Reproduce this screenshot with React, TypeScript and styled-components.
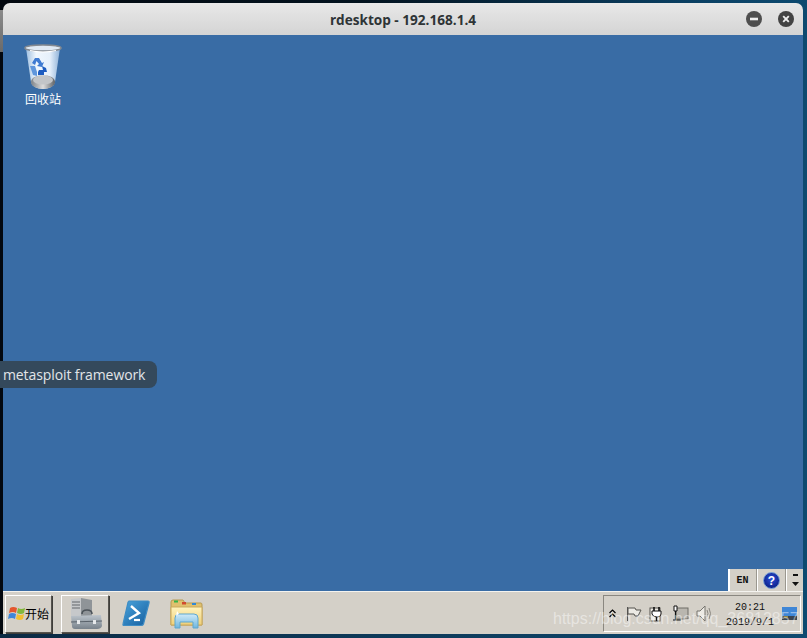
import React from 'react';
import styled, { createGlobalStyle } from 'styled-components';

const GlobalStyle = createGlobalStyle`
  html, body {
    margin: 0;
    padding: 0;
    height: 100%;
    overflow: hidden;
    background: #000;
  }
`;

const Screen = styled.div`
  position: relative;
  box-sizing: border-box;
  width: 807px;
  height: 638px;
  padding: 3px 4px 4px 3px;
  overflow: hidden;
  display: flex;
  background:
    linear-gradient(#8b8b8b, #6a6a6a) 0 10px / 3px 42px no-repeat,
    linear-gradient(90deg, #0b2a44, #0f4a70) 0 100% / 100% 4px no-repeat,
    linear-gradient(90deg, #03080f 0%, #03131f 45%, #0a3f62 85%, #0d4a70 100%);
`;

const Window = styled.div`
  flex: 1;
  display: flex;
  flex-direction: column;
  border-radius: 7px 7px 0 0;
  overflow: hidden;
`;

const TitleBar = styled.header`
  position: relative;
  flex: 0 0 32px;
  display: flex;
  align-items: center;
  justify-content: center;
  background: linear-gradient(180deg, #e8e8e8 0%, #d4d4d4 100%);
`;

const Title = styled.h1`
  margin: 0;
  font: 700 13.6px "Open Sans", sans-serif;
  color: #2e3436;
`;

const WindowButtons = styled.div`
  position: absolute;
  right: 9px;
  top: 8px;
  display: flex;
  gap: 16px;
`;

const RoundButton = styled.svg`
  display: block;
  width: 16px;
  height: 16px;
`;

const Desktop = styled.main`
  flex: 1;
  display: flex;
  flex-direction: column;
  align-items: flex-start;
  background: #396ca5;
`;

const DesktopIcon = styled.div`
  margin: 9px 0 0 15px;
  width: 50px;
  display: flex;
  flex-direction: column;
  align-items: center;
`;

const IconLabel = styled.span`
  margin-top: 1px;
  font: 12px/16px "Noto Sans CJK SC", sans-serif;
  color: #fff;
  white-space: nowrap;
`;

const LangBar = styled.div`
  margin: auto 0 0 auto;
  width: 75px;
  height: 22px;
  display: grid;
  grid-template-columns: 28px 29px 18px;
  background: #d4d0c8;
  border-left: 1px solid #fff;
  box-sizing: border-box;
`;

const LangCell = styled.div`
  display: flex;
  align-items: center;
  justify-content: center;
  border-right: 1px solid #9a978f;
  box-shadow: inset 1px 0 0 #fff;
  font: 700 10px "Liberation Mono", monospace;
  color: #111;

  &:last-child {
    border-right: 0;
  }
`;

const Taskbar = styled.footer`
  flex: 0 0 43px;
  box-sizing: border-box;
  display: flex;
  align-items: center;
  gap: 9px;
  padding: 1px 2px 0 2px;
  border-top: 1px solid #f4f3ef;
  background: #d4d0c8;
`;

const TaskButton = styled.div<{ $width: number }>`
  box-sizing: border-box;
  width: ${(p) => p.$width}px;
  height: 38px;
  display: flex;
  align-items: center;
  justify-content: center;
  border: 1px solid;
  border-color: #fff #55534e #55534e #fff;
  box-shadow: 1px 1px 0 #3f3e3a;
  font: 12px "Noto Sans CJK SC", sans-serif;
  color: #000;
`;

const QuickIcon = styled.div<{ $width: number; $gap: number }>`
  width: ${(p) => p.$width}px;
  margin-left: ${(p) => p.$gap}px;
  display: flex;
  justify-content: center;
`;

const Tray = styled.div`
  box-sizing: border-box;
  margin-left: auto;
  width: 198px;
  height: 37px;
  display: flex;
  align-items: center;
  padding-left: 5px;
  border: 1px solid;
  border-color: #8a8780 #fff #fff #8a8780;
`;

const TrayIcons = styled.div`
  display: flex;
  align-items: center;
  gap: 7px;
`;

const Chevrons = styled.svg`
  display: block;
  width: 7px;
  height: 9px;
  margin-right: 3px;
`;

const Clock = styled.div`
  margin: 2px 7px 0 13px;
  width: 50px;
  text-align: center;
  font: 10px/15px "Liberation Mono", monospace;
  color: #111;
`;

const Tooltip = styled.div`
  position: absolute;
  left: 0;
  top: 361px;
  width: 157px;
  height: 27px;
  box-sizing: border-box;
  padding-left: 3px;
  border-radius: 0 8px 8px 0;
  background: #34495c;
  font: 14px/27px "Open Sans", sans-serif;
  letter-spacing: -0.1px;
  color: #e2e5e8;
  white-space: nowrap;
`;

const Watermark = styled.div`
  position: absolute;
  left: 553px;
  top: 609px;
  font: 16px/20px "Liberation Sans", sans-serif;
  color: rgba(255, 255, 255, 0.45);
  white-space: nowrap;
`;

const RecycleBin = () => (
  <svg width="38" height="46" viewBox="0 0 38 46">
    <defs>
      <linearGradient id="binBody" x1="0" x2="1" y1="0" y2="0">
        <stop offset="0" stopColor="#9fbfe0" />
        <stop offset="0.3" stopColor="#f0f7fe" />
        <stop offset="0.7" stopColor="#e6f0fb" />
        <stop offset="1" stopColor="#8fb2d8" />
      </linearGradient>
      <linearGradient id="binBase" x1="0" x2="1" y1="0" y2="0">
        <stop offset="0" stopColor="#7d8287" />
        <stop offset="0.5" stopColor="#dcdcdc" />
        <stop offset="1" stopColor="#5f6367" />
      </linearGradient>
    </defs>
    <path d="M2 4 L7 38 Q8 44 19 45 Q30 44 31 38 L36 4 Z" fill="url(#binBody)" />
    <ellipse cx="19" cy="38" rx="12" ry="7" fill="url(#binBase)" />
    <ellipse cx="19" cy="36" rx="10" ry="4.5" fill="#c2c5c8" />
    <ellipse cx="19" cy="4" rx="18" ry="3" fill="#dfe9f4" stroke="#858a91" strokeWidth="1.5" />
    <path d="M6 6.5 Q19 9.5 32 6.5" fill="none" stroke="#fff" strokeWidth="1.2" />
    <path d="M8 19 L11 14 L15 14 L18 19 L20 18 L18 23 L13 22 L15 20 L12.5 17 L11 21 Z" fill="#3f7bd2" />
    <path d="M14 31 L20 31 L20 28 L23 28 L22 24 L18 22 L19 26 L15 26 L14 28 Z" fill="#1d5cc0" />
    <path d="M6 22 L11 22 L13 28 L13 32 L9 31 Z" fill="#5f96dc" />
  </svg>
);

const WindowsFlag = () => (
  <svg width="17" height="15" viewBox="0 0 17 15">
    <path d="M2 2 Q5 0 9 2 L8 7 Q5 5 1 7 Z" fill="#e4572e" />
    <path d="M10 2 Q13 4 17 2 L16 7 Q13 9 9 7 Z" fill="#82b83c" />
    <path d="M1 8 Q4 6 8 8 L7 13 Q4 11 0 13 Z" fill="#3f86d8" />
    <path d="M9 8 Q12 10 16 8 L15 13 Q12 15 8 13 Z" fill="#f2bf30" />
  </svg>
);

const ServerManager = () => (
  <svg width="34" height="32" viewBox="0 0 34 32">
    <defs>
      <linearGradient id="toolbox" x1="0" x2="0" y1="0" y2="1">
        <stop offset="0" stopColor="#bcc4cb" />
        <stop offset="1" stopColor="#78828b" />
      </linearGradient>
    </defs>
    <path d="M3 1 L13 0 L13 20 L3 20 Z" fill="#c6c8ca" />
    <path d="M13 0 L24 2 L24 18 L13 20 Z" fill="#8f9498" />
    <path d="M4 4 H12 M4 7 H12 M4 10 H12" stroke="#63676b" strokeWidth="1.2" />
    <path d="M14 16 Q14 12 19 12 Q24 12 24 16" fill="none" stroke="#4c5359" strokeWidth="1.6" />
    <path d="M3 18 L33 17 L34 28 Q33 31 29 31 L7 31 Q4 31 4 28 Z" fill="url(#toolbox)" />
    <path d="M3 24 L34 23" stroke="#59626a" strokeWidth="1" />
    <rect x="9" y="22" width="3" height="4" fill="#e6e9eb" />
    <rect x="25" y="22" width="3" height="4" fill="#e6e9eb" />
  </svg>
);

const PowerShell = () => (
  <svg width="28" height="27" viewBox="0 0 28 27">
    <defs>
      <linearGradient id="psBlue" x1="0" x2="1" y1="0" y2="1">
        <stop offset="0" stopColor="#4aa4dc" />
        <stop offset="1" stopColor="#145d9e" />
      </linearGradient>
    </defs>
    <path d="M7 1 L26 1 Q27.5 1 27 3 L21.5 24 Q21 25.5 19 25.5 L2 25.5 Q0.6 25.5 1 24 L6 2.5 Q6.3 1 7 1 Z" fill="url(#psBlue)" stroke="#3d8cc4" strokeWidth="1.2" />
    <path d="M9 6 L17 13 L7 19" fill="none" stroke="#fff" strokeWidth="2.4" />
    <path d="M12 20 H18" stroke="#fff" strokeWidth="2.2" />
  </svg>
);

const Explorer = () => (
  <svg width="33" height="30" viewBox="0 0 33 30">
    <defs>
      <linearGradient id="folderFill" x1="0" x2="0" y1="0" y2="1">
        <stop offset="0" stopColor="#fff3bd" />
        <stop offset="1" stopColor="#efcf78" />
      </linearGradient>
      <linearGradient id="glassFill" x1="0" x2="0" y1="0" y2="1">
        <stop offset="0" stopColor="#cfeaf8" />
        <stop offset="1" stopColor="#6fb6de" />
      </linearGradient>
    </defs>
    <path d="M1 3 Q1 1 3 1 L13 1 L15 4 L31 4 Q32 4 32 6 L32 26 L1 26 Z" fill="#e0c06e" stroke="#b79a52" />
    <rect x="4" y="1.5" width="4" height="2" fill="#35b44a" />
    <rect x="12" y="3" width="4" height="2.5" fill="#d24a2e" />
    <rect x="22" y="4" width="4" height="2" fill="#2f88d8" />
    <path d="M1 8 H32 V26 H1 Z" fill="url(#folderFill)" stroke="#c9a95c" />
    <path d="M5 19 Q5 15 9 15 H24 Q28 15 28 19 V29 H23 V23 H10 V29 H5 Z" fill="url(#glassFill)" stroke="#5fa7cf" />
    <path d="M6 17 L9 15 L7 12 Z" fill="#fff" />
  </svg>
);

const HelpIcon = () => (
  <svg width="17" height="17" viewBox="0 0 17 17">
    <defs>
      <radialGradient id="helpFill" cx="0.5" cy="0.4" r="0.6">
        <stop offset="0" stopColor="#2c4fd8" />
        <stop offset="1" stopColor="#0b1f86" />
      </radialGradient>
    </defs>
    <circle cx="8.5" cy="8.5" r="8" fill="url(#helpFill)" stroke="#7fa6d8" />
    <text x="8.5" y="13" textAnchor="middle" fontSize="12" fontWeight="700" fontFamily="Liberation Sans, sans-serif" fill="#fff">?</text>
  </svg>
);

const LangOptions = () => (
  <svg width="9" height="15" viewBox="0 0 9 15">
    <path d="M2 2 H7" stroke="#111" strokeWidth="2" />
    <path d="M1 9 H8 L4.5 13 Z" fill="#111" />
  </svg>
);

const ChevronsUp = () => (
  <Chevrons viewBox="0 0 7 9">
    <path d="M0.5 4 L3.5 1 L6.5 4 M0.5 8 L3.5 5 L6.5 8" fill="none" stroke="#000" strokeWidth="1.2" />
  </Chevrons>
);

const FlagTray = () => (
  <svg width="16" height="16" viewBox="0 0 16 16">
    <path d="M1.5 1 V15" stroke="#555" />
    <path d="M2 2 H9 L10 4 H15 L12 10 H9 L8 8 H2 Z" fill="#eceae4" stroke="#55534e" />
  </svg>
);

const PowerTray = () => (
  <svg width="16" height="17" viewBox="0 0 16 17">
    <rect x="1" y="3" width="10" height="13" fill="#eceae4" stroke="#55534e" />
    <path d="M5 6 V2 M10 6 V2" stroke="#111" strokeWidth="1.6" />
    <path d="M3 6 H12 V9 Q12 12 8 12 Q4 12 3 9 Z" fill="#fff" stroke="#111" />
    <path d="M7.5 12 V16" stroke="#111" strokeWidth="1.4" />
  </svg>
);

const NetworkTray = () => (
  <svg width="17" height="17" viewBox="0 0 17 17">
    <rect x="4" y="3" width="12" height="11" fill="#b9b6af" stroke="#6e6c66" />
    <path d="M2 1 V6 H5 V1 Z" fill="#fff" stroke="#111" />
    <path d="M3.5 6 V15 M1 15 H9" stroke="#111" strokeWidth="1.2" />
  </svg>
);

const VolumeTray = () => (
  <svg width="16" height="17" viewBox="0 0 16 17">
    <path d="M1 6 H4 L9 1 V16 L4 11 H1 Z" fill="#eceae4" stroke="#77756f" />
    <path d="M11 5 Q13 8.5 11 12 M13 3 Q16 8.5 13 14" fill="none" stroke="#8a8780" />
  </svg>
);

const ShowDesktop = () => (
  <svg width="15" height="13" viewBox="0 0 15 13">
    <rect x="0" y="0" width="15" height="13" fill="#3f86d6" />
    <rect x="0" y="9" width="15" height="4" fill="#3a4450" />
    <path d="M2 10 H6" stroke="#e8c23a" />
  </svg>
);

export default function App() {
  return (
    <Screen>
      <GlobalStyle />
      <Window>
        <TitleBar>
          <Title>rdesktop - 192.168.1.4</Title>
          <WindowButtons>
            <RoundButton viewBox="0 0 16 16">
              <circle cx="8" cy="8" r="8" fill="#4e4e4e" />
              <rect x="4" y="6.7" width="8" height="2.6" fill="#eee" />
            </RoundButton>
            <RoundButton viewBox="0 0 16 16">
              <circle cx="8" cy="8" r="8" fill="#434343" />
              <path d="M5.2 5.2 L10.8 10.8 M10.8 5.2 L5.2 10.8" stroke="#eee" strokeWidth="1.9" />
            </RoundButton>
          </WindowButtons>
        </TitleBar>
        <Desktop>
          <DesktopIcon>
            <RecycleBin />
            <IconLabel>回收站</IconLabel>
          </DesktopIcon>
          <LangBar>
            <LangCell>EN</LangCell>
            <LangCell><HelpIcon /></LangCell>
            <LangCell><LangOptions /></LangCell>
          </LangBar>
        </Desktop>
        <Taskbar>
          <TaskButton $width={47}>
            <WindowsFlag />
            开始
          </TaskButton>
          <TaskButton $width={48}>
            <ServerManager />
          </TaskButton>
          <QuickIcon $width={28} $gap={4}>
            <PowerShell />
          </QuickIcon>
          <QuickIcon $width={33} $gap={11}>
            <Explorer />
          </QuickIcon>
          <Tray>
            <TrayIcons>
              <ChevronsUp />
              <FlagTray />
              <PowerTray />
              <NetworkTray />
              <VolumeTray />
            </TrayIcons>
            <Clock>
              20:21
              <br />
              2019/9/1
            </Clock>
            <ShowDesktop />
          </Tray>
        </Taskbar>
      </Window>
      <Tooltip>metasploit framework</Tooltip>
      <Watermark>https://blog.csdn.net/qq_36812857</Watermark>
    </Screen>
  );
}
